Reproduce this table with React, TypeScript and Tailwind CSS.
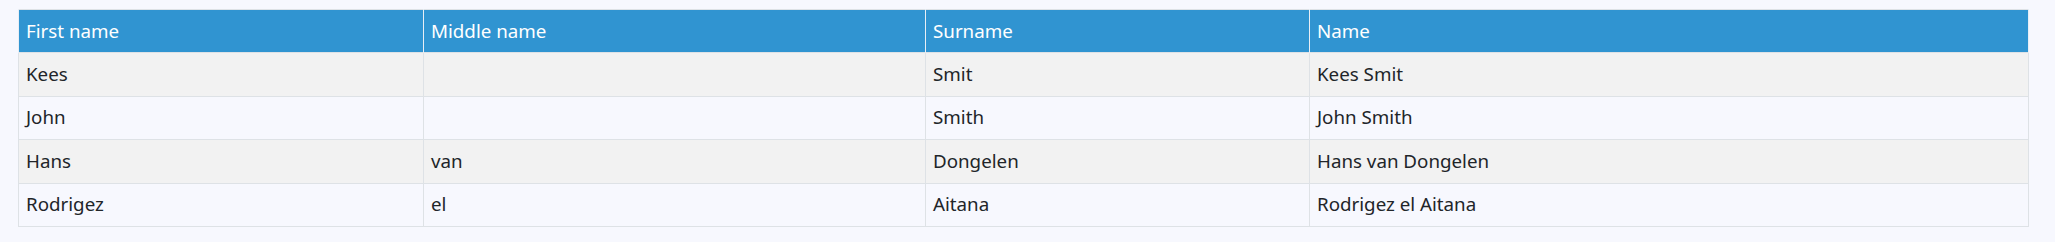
const rows = [
  { first: "Kees", middle: "", surname: "Smit" },
  { first: "John", middle: "", surname: "Smith" },
  { first: "Hans", middle: "van", surname: "Dongelen" },
  { first: "Rodrigez", middle: "el", surname: "Aitana" },
];

export default function App() {
  return (
    <div
      className="min-h-[242px] bg-[#f7f8fe] pt-[9px] pl-[18px] text-[18.75px] text-[#212529]"
      style={{ fontFamily: '"Noto Sans", "Open Sans", sans-serif' }}
    >
      <table className="w-[2010px] table-fixed border-collapse border border-[#dee2e6]">
        <colgroup>
          <col className="w-[405px]" />
          <col className="w-[502px]" />
          <col className="w-[384px]" />
          <col className="w-[719px]" />
        </colgroup>
        <thead>
          <tr className="h-[43px] bg-[#3094d1] text-white">
            {["First name", "Middle name", "Surname", "Name"].map((h) => (
              <th
                key={h}
                className="border-x border-[#e8eef5] px-[7px] text-left font-normal leading-none"
              >
                {h}
              </th>
            ))}
          </tr>
        </thead>
        <tbody>
          {rows.map((r, i) => (
            <tr
              key={r.first}
              className={`h-[43.5px] ${i % 2 === 0 ? "bg-[#f2f2f2]" : "bg-[#f7f8fe]"}`}
            >
              <td className="border border-[#dee2e6] px-[7px] leading-none">{r.first}</td>
              <td className="border border-[#dee2e6] px-[7px] leading-none">{r.middle}</td>
              <td className="border border-[#dee2e6] px-[7px] leading-none">{r.surname}</td>
              <td className="border border-[#dee2e6] px-[7px] leading-none">
                {[r.first, r.middle, r.surname].filter(Boolean).join(" ")}
              </td>
            </tr>
          ))}
        </tbody>
      </table>
    </div>
  );
}
